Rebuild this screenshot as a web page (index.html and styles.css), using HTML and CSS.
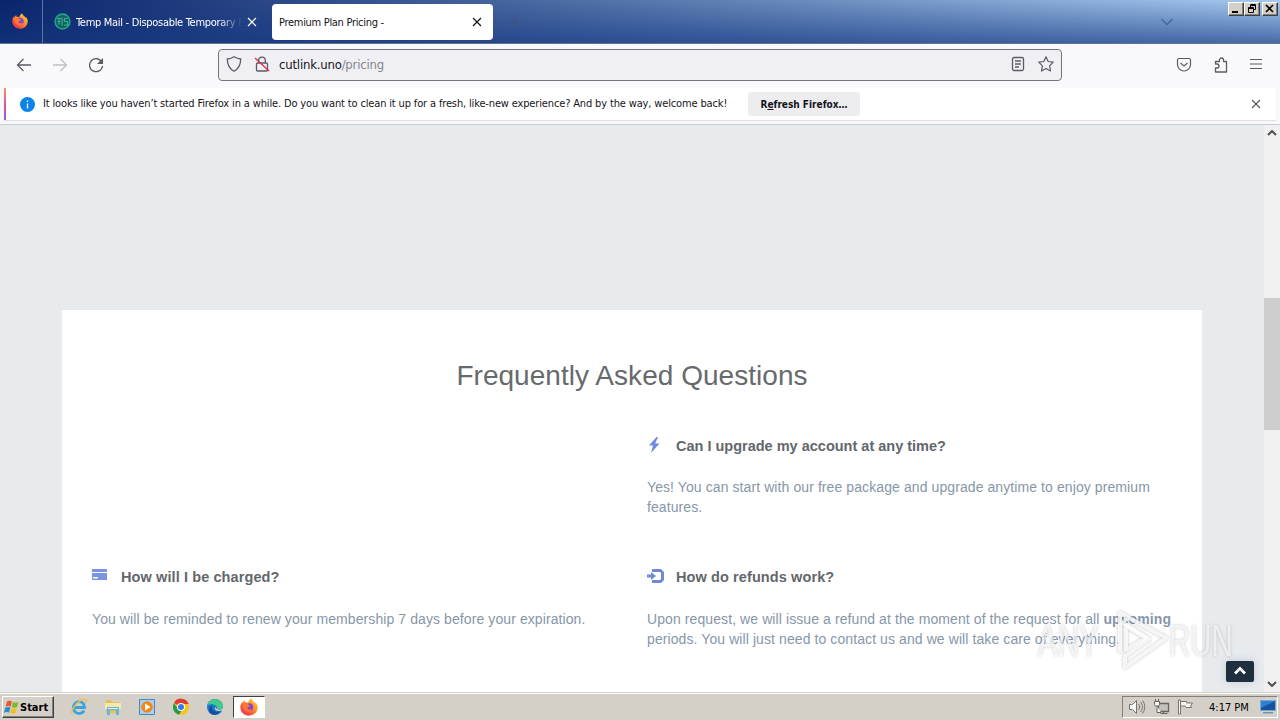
FILE: index.html
```html
<!DOCTYPE html>
<html lang="en">
<head>
    <meta charset="UTF-8">
    <meta name="viewport" content="width=device-width, initial-scale=1.0">
    <title>Premium Plan Pricing -</title>
    <link rel="stylesheet" href="styles.css">
</head>
<body>
    <!-- shared icons -->
    <svg class="defs" width="0" height="0">
        <defs>
            <linearGradient id="flame" x1="1" y1="0" x2="0.2" y2="1">
                <stop offset="0" stop-color="#ffe14a"/>
                <stop offset="0.45" stop-color="#ff9328"/>
                <stop offset="1" stop-color="#f0264f"/>
            </linearGradient>
            <symbol id="firefox" viewBox="0 0 16 16">
                <path fill="url(#flame)" d="M10.2.3c.3 1.500 1.200 2.200 2.200 3 .5.400.8.900 1 1.400l.5-.7C15.100 5.200 15.700 6.800 15.700 8.400c0 4.100-3.400 7.300-7.700 7.300S.3 12.500.3 8.300c0-2 .7-3.700 1.700-5l.3 1.200c.5-1.100 1.200-1.900 2-2.400l.2 1.700c1 0 1.900.1 2.700.4C7.800 2.200 8.800 1 10.200.3z"/>
                <circle cx="8.200" cy="8.200" r="3.500" fill="#8545cf"/>
                <path fill="#ff7633" d="M2.600 5c2-.7 3.600-.4 4.900.8L9.300 7c-.9.600-1.700.8-2.600 1-.4 1.300.4 2.300 1.700 2.400 1.100.1 1.700-.7 2.700-.4-1 2-3.100 2.700-5 2C3.600 11.200 2.300 8.200 2.600 5z"/>
            </symbol>
            <symbol id="close" viewBox="0 0 10 10">
                <path fill="none" stroke="currentColor" stroke-width="1.200" d="M1 1l8 8M9 1L1 9"/>
            </symbol>
        </defs>
    </svg>

    <div class="titlebar">
        <div class="pinned-tab"><svg width="16" height="16"><use href="#firefox"/></svg></div>
        <div class="tab">
            <svg width="17" height="17" viewBox="0 0 17 17" fill="none">
                <circle cx="8.500" cy="8.500" r="7.400" fill="#16605f" stroke="#1fa38d" stroke-width="1.600"/>
                <path stroke="#35ad99" stroke-width="1.200" d="M3 5.500h4M5 5.500v6M3.500 8.500h3M8 4.500v8M13.500 5.500h-3v3h3v3.500h-3.500"/>
            </svg>
            <span class="tab-title faded">Temp Mail - Disposable Temporary E</span>
            <svg class="tab-close" width="10" height="10"><use href="#close"/></svg>
        </div>
        <div class="tab active">
            <span class="tab-title">Premium Plan Pricing -</span>
            <svg class="tab-close" width="10" height="10"><use href="#close"/></svg>
        </div>
        <svg class="new-tab" width="10" height="10" viewBox="0 0 10 10"><path stroke="#42536f" stroke-width="1.300" d="M5 0v10M0 5h10"/></svg>
        <svg class="all-tabs" width="14" height="8" viewBox="0 0 14 8"><path fill="none" stroke="#4a6a9b" stroke-width="1.600" d="M1.500 1L7 6.500 12.500 1"/></svg>
        <div class="window-buttons">
            <span class="winbtn"><svg width="12" height="10" viewBox="0 0 12 10"><path fill="#000" d="M2 7h6v2H2z"/></svg></span>
            <span class="winbtn"><svg width="12" height="10" viewBox="0 0 12 10" fill="none" stroke="#000"><path d="M4.500 3V.5h5v5H8M4 1.500h6M2.500 3.500h5v5h-5zM2 4.500h6"/></svg></span>
            <span class="winbtn gap"><svg width="12" height="10" viewBox="0 0 12 10"><path stroke="#000" stroke-width="1.700" d="M2 1l7 7M9 1L2 8"/></svg></span>
        </div>
    </div>

    <div class="toolbar">
        <svg class="back" width="16" height="16" viewBox="0 0 16 16" fill="none" stroke="#5b5b66" stroke-width="1.300"><path d="M15 8H1.500M7.500 2L1.500 8l6 6"/></svg>
        <svg class="forward" width="16" height="16" viewBox="0 0 16 16" fill="none" stroke="#bfbfc6" stroke-width="1.300"><path d="M1 8h13.500M8.500 2l6 6-6 6"/></svg>
        <svg class="reload" width="16" height="16" viewBox="0 0 16 16" fill="none" stroke="#5b5b66" stroke-width="1.300"><path d="M14 5.500A6.500 6.500 0 1 0 14.500 9"/><path fill="#5b5b66" stroke="none" d="M15 1v6H9z"/></svg>
        <div class="urlbar">
            <svg width="16" height="16" viewBox="0 0 16 16" fill="none" stroke="#5b5b66" stroke-width="1.300"><path d="M8 .8c2 1.300 4.300 2 6.700 2.200 0 6-1.700 9.500-6.700 12.200C3 12.500 1.300 9 1.300 3 3.700 2.800 6 2.100 8 .8z"/></svg>
            <svg class="lock" width="16" height="16" viewBox="0 0 16 16" fill="none" stroke="#5b5b66" stroke-width="1.300"><rect x="2.500" y="7" width="11" height="8" rx="1"/><path d="M4.700 7V4.500a3.300 3.300 0 0 1 6.600 0V7"/><path stroke="#e22850" d="M1 2l14 13"/></svg>
            <span class="url">cutlink.uno<span class="path">/pricing</span></span>
            <svg class="reader" width="14" height="16" viewBox="0 0 14 16" fill="none" stroke="#5b5b66" stroke-width="1.300"><rect x="1.500" y="1.500" width="11" height="13" rx="1.500"/><path d="M4 5h6M4 8h6M4 11h4"/></svg>
            <svg width="16" height="16" viewBox="0 0 16 16" fill="none" stroke="#5b5b66" stroke-width="1.200" stroke-linejoin="round"><path d="M8 .8l2.200 4.700 5 .7-3.600 3.600.9 5.200L8 12.500 3.500 15l.9-5.200L.8 6.200l5-.7z"/></svg>
        </div>
        <svg class="pocket" width="16" height="16" viewBox="0 0 16 16" fill="none" stroke="#5b5b66" stroke-width="1.200"><path d="M3 1.500h10a1.500 1.500 0 0 1 1.500 1.500v4.500a6.500 6.500 0 0 1-13 0V3A1.500 1.500 0 0 1 3 1.500z"/><path d="M4.500 6L8 9l3.500-3"/></svg>
        <svg class="extensions" width="16" height="16" viewBox="0 0 16 16" fill="none" stroke="#5b5b66" stroke-width="1.300" stroke-linejoin="round"><path d="M2.500 15V11H4a2 2 0 0 0 0-4H2.500V4.500h4V3a2 2 0 0 1 4 0v1.500h3V15z"/></svg>
        <svg class="menu" width="14" height="14" viewBox="0 0 14 14"><path stroke="#5b5b66" stroke-width="1.200" d="M1 1.500h12M1 6h12M1 10.500h12"/></svg>
    </div>

    <div class="notice-area">
        <div class="notice">
            <span class="info"><svg width="15" height="15" viewBox="0 0 15 15"><circle cx="7.500" cy="7.500" r="7.500" fill="#0a84e8"/><path stroke="#fff" stroke-width="1.300" d="M7.500 6.500v5M7.500 3.500v1.500"/></svg></span>
            <span class="notice-text">It looks like you haven’t started Firefox in a while. Do you want to clean it up for a fresh, like-new experience? And by the way, welcome back!</span>
            <button class="refresh">R<u>e</u>fresh Firefox…</button>
            <svg class="notice-close" width="10" height="10"><use href="#close"/></svg>
        </div>
    </div>

    <div class="viewport">
        <div class="page">
            <div class="faq">
                <h2>Frequently Asked Questions</h2>
                <div class="questions">
                    <div class="question"></div>
                    <div class="question">
                        <h4><svg width="16" height="18" viewBox="0 0 16 18"><path fill="#6c8ae0" d="M9.500 1L2 9.500h4L4 17l8.500-9.500h-4.300L11 1z"/></svg>Can I upgrade my account at any time?</h4>
                        <p>Yes! You can start with our free package and upgrade anytime to enjoy premium features.</p>
                    </div>
                    <div class="question lower">
                        <h4><svg width="16" height="18" viewBox="0 0 16 18"><path fill="#7b93e3" d="M0 2h15v3H0zM0 6h15v7H0z"/><path fill="#fff" d="M1 10h5v1.500H1z"/></svg>How will I be charged?</h4>
                        <p>You will be reminded to renew your membership 7 days before your expiration.</p>
                    </div>
                    <div class="question lower">
                        <h4><svg width="18" height="18" viewBox="0 0 18 18"><path fill="#7189d8" d="M5 2h9l3 3v8l-3 3H5v-3h8l1-1V6l-1-1H5zM0 7.500h4V5l5 4-5 4v-2.500H0z"/></svg>How do refunds work?</h4>
                        <p>Upon request, we will issue a refund at the moment of the request for all <b>upcoming</b> periods. You will just need to contact us and we will take care of everything.</p>
                    </div>
                </div>
            </div>
        </div>
        <div class="scrollbar">
            <svg width="10" height="6" viewBox="0 0 10 6"><path fill="none" stroke="#505050" stroke-width="2" d="M1 5l4-4 4 4"/></svg>
            <div class="thumb"></div>
            <svg width="10" height="6" viewBox="0 0 10 6"><path fill="none" stroke="#505050" stroke-width="2" d="M1 1l4 4 4-4"/></svg>
        </div>
        <div class="to-top"><svg width="12" height="9" viewBox="0 0 12 9"><path fill="none" stroke="#fff" stroke-width="2.800" d="M1 7.500l5-5 5 5"/></svg></div>
        <div class="watermark">
            <span class="any">ANY</span>
            <svg width="60" height="64" viewBox="0 0 60 64" fill="none" stroke="#fff" stroke-opacity="0.800" stroke-width="4" stroke-linejoin="round"><path d="M10 15V4l46 25-41 29v-11l24-17L10 12v32"/><path d="M16 17v24l20-12z"/></svg>
            <span class="run">RUN</span>
        </div>
    </div>

    <div class="taskbar">
        <div class="start">
            <svg width="16" height="15" viewBox="0 0 16 15"><path fill="#e9572b" d="M3 1.500c2-1 3.500-.8 5 0L6.700 6.500c-1.600-.8-3.100-.8-5 0z"/><path fill="#7db928" d="M9 2c2 1 3.500.8 5.500 0l-1.400 5c-1.900.9-3.500.9-5.300 0z"/><path fill="#298bd4" d="M1.400 7.600c2-.9 3.500-.8 5 0L5 12.700c-1.500-.8-3-.8-5 0z"/><path fill="#f5bd24" d="M7.500 8c2 1 3.500.9 5.400 0l-1.400 5c-2 .9-3.600.9-5.400 0z"/></svg>
            <span>Start</span>
        </div>
        <div class="launchers">
            <svg width="18" height="18" viewBox="0 0 18 18" fill="none"><path stroke="#3aa4e2" stroke-width="2.800" d="M4 9.500h10.500C14.500 1.500 3.500 2 3.500 9.500c0 7 8.500 7.500 10.500 3"/><path stroke="#efbd3c" stroke-width="1.300" d="M2.500 16C-1 14 9-.5 16 1.500c1 .5.700 2-.3 3.500"/></svg>
            <svg width="18" height="18" viewBox="0 0 18 18"><path fill="#e8bf57" d="M2 2h5l1 2h7v11H2z"/><path fill="#fae9a4" d="M1 5h16v6H1z"/><path fill="#67b5db" d="M3 9h12v8h-3v-5H6v5H3z"/><path fill="#d6f0f7" d="M4 10h10v1H4z"/></svg>
            <svg width="18" height="18" viewBox="0 0 18 18"><path fill="#a6d1f2" stroke="#4588c1" d="M1.500 1.500h15v15h-15z"/><circle cx="9" cy="9" r="5.800" fill="#f58614"/><path fill="#fff" d="M7 5.500l5.500 3.500L7 12.500z"/></svg>
            <svg width="18" height="18" viewBox="0 0 18 18"><circle cx="9" cy="9" r="8" fill="#f8c51b"/><path fill="#de3c2f" d="M9 9L2 5a8 8 0 0 1 14.700 1H9z"/><path fill="#249b50" d="M2 5l4 6 4 1-3 4.800A8 8 0 0 1 2 5z"/><circle cx="9" cy="9" r="4" fill="#fff"/><circle cx="9" cy="9" r="3" fill="#347ddd"/></svg>
            <svg width="18" height="18" viewBox="0 0 18 18"><circle cx="9" cy="9" r="8" fill="#1679c9"/><path fill="#43c98b" d="M1.500 7C3.500-.5 16-1 17 8c0 3-3 4-6 3 1-4-5-6-9.500-4z"/><path fill="#174c9c" d="M7 7c-3 3 0 8 7 6.500-3 4-8 4-10 1.500S3 8.500 7 7z"/><path fill="#d4d0c8" d="M9 9c-1 3 2 4.800 6.500 3.500l1.500.5v-3c-2 2-4 2-6 1z"/></svg>
        </div>
        <div class="task-active"><svg width="18" height="18"><use href="#firefox"/></svg></div>
        <div class="tray">
            <svg width="18" height="16" viewBox="0 0 18 16" fill="none" stroke="#77756f"><path fill="#f7f7f5" d="M1.500 5.500h3l4-4v13l-4-4h-3z"/><path d="M10.500 5c1.500 2 1.500 4 0 6M12.500 3c2.500 3 2.500 7 0 10M14.500 1.500c3 4 3 9 0 13"/></svg>
            <svg width="17" height="16" viewBox="0 0 17 16" fill="none" stroke="#65645f"><path fill="#c4c2bc" stroke-width="1.300" d="M5.500 4.500h10v8h-10z"/><path d="M7.500 14.500h7M10.500 12v3"/><path fill="#f7f7f5" d="M1.500 2.500h5v3l-1 1.500h-3l-1-1.500zM2.500 0v2.500M5.500 0v2.500M4 7v6.500h4"/></svg>
            <svg width="17" height="16" viewBox="0 0 17 16" fill="#f7f7f5" stroke="#77756f"><path d="M1.500 1h2v14h-2zM3.500 2.500h6v1.500h6l-2 3 1 1.500H9l-1-1.500H3.500z"/></svg>
            <span class="clock">4:17 PM</span>
            <svg width="16" height="14" viewBox="0 0 16 14"><path fill="#17529f" stroke="#74abd8" d="M.5.5h15v10H.5z"/><path fill="#2f81cf" d="M1 1h14L1 8z"/><path fill="#7094b4" d="M3 12h10v1.500H3z"/></svg>
        </div>
    </div>
</body>
</html>
```

FILE: styles.css
```css
* {
    box-sizing: border-box;
}
body {
    margin: 0;
    width: 1280px;
    height: 720px;
    overflow: hidden;
    display: flex;
    flex-direction: column;
    font-family: "DejaVu Sans Condensed", "DejaVu Sans", Tahoma, sans-serif;
    font-size: 11px;
    color: #15141a;
}
svg {
    flex: none;
    display: block;
}
.defs {
    position: absolute;
}

/* Tabs */
.titlebar {
    height: 44px;
    flex: none;
    display: flex;
    align-items: center;
    background: linear-gradient(180deg, rgba(20,60,140,0), rgba(20,55,130,0.65)), linear-gradient(90deg, #0a246a, #a6caf0);
    border-bottom: 1px solid #687287;
}
.pinned-tab {
    width: 43px;
    height: 43px;
    padding: 13px 0 0 12px;
    border-right: 1px solid #61739f;
}
.tab {
    display: flex;
    align-items: center;
    width: 229px;
    height: 36px;
    padding: 0 15px 0 11px;
    color: #fff;
}
.tab.active {
    width: 221px;
    padding: 0 11px 0 7px;
    border-radius: 4px;
    background: #fff;
    color: #15141a;
}
.tab-title {
    flex: 1;
    overflow: hidden;
    white-space: nowrap;
    line-height: 16px;
    padding-top: 3px;
    letter-spacing: -0.3px;
}
.tab svg + .tab-title {
    margin-left: 5px;
}
.faded {
    -webkit-mask-image: linear-gradient(90deg, #000 86%, transparent);
    mask-image: linear-gradient(90deg, #000 86%, transparent);
}
.tab-close {
    margin-left: 5px;
}
.new-tab {
    margin-left: 17px;
    opacity: 0.7;
}
.all-tabs {
    margin-left: auto;
    margin-right: 54px;
}
.window-buttons {
    display: flex;
    align-self: flex-start;
    margin: 2px 2px 0 0;
}
.winbtn {
    width: 16px;
    height: 14px;
    padding: 1px;
    background: #d4d0c8;
    border: 1px solid;
    border-color: #fff #404040 #404040 #fff;
    box-shadow: inset -1px -1px #808080;
}
.winbtn.gap {
    margin-left: 2px;
}

/* Navigation */
.toolbar {
    height: 42px;
    flex: none;
    display: flex;
    align-items: center;
    padding: 0 17px 1px 16px;
    background: #f9f9fb;
}
.forward, .reload {
    margin-left: 20px;
}
.urlbar {
    width: 844px;
    height: 32px;
    margin-left: 114px;
    padding: 0 7px 1px;
    display: flex;
    align-items: center;
    background: #f0f0f4;
    border: 1px solid #74747e;
    border-radius: 4px;
}
.lock {
    margin-left: 12px;
}
.url {
    flex: 1;
    margin-left: 9px;
    font-size: 13px;
    letter-spacing: -0.2px;
}
.path {
    color: #85858d;
}
.reader {
    margin-right: 13px;
}
.pocket {
    margin-left: 114px;
}
.extensions {
    margin-left: 21px;
}
.menu {
    margin-left: auto;
}

/* Notification bar */
.notice-area {
    height: 39px;
    flex: none;
    padding: 2px 4px 4px;
    background: #f9f9fb;
    border-bottom: 1px solid #cccccf;
}
.notice {
    height: 32px;
    display: flex;
    align-items: center;
    padding: 0 15px 0 14px;
    background: #fff;
    border-left: 2px solid;
    border-image: linear-gradient(#f09a5c, #e0589a, #9059d8) 1;
    box-shadow: 0 1px 1px #e2e2e6;
}
.notice-text {
    width: 684px;
    margin: 0 0 2px 8px;
    white-space: nowrap;
    letter-spacing: -0.147px;
}
.refresh {
    width: 112px;
    height: 24px;
    margin-left: 21px;
    padding: 0;
    border: none;
    border-radius: 4px;
    background: #ededf0;
    color: #15141a;
    font: bold 10px "DejaVu Sans Condensed", "DejaVu Sans", sans-serif;
}
.notice-close {
    margin-left: auto;
    color: #5b5b66;
}

/* Page */
.viewport {
    position: relative;
    flex: 1;
    min-height: 0;
    display: flex;
    overflow: hidden;
    font-family: "Liberation Sans", Arial, sans-serif;
}
.page {
    flex: 1;
    padding: 185px 62px 0;
    background: #e7ebee;
}
.faq {
    height: 400px;
    padding: 48px 30px 0;
    background: #fff;
    color: #676a6c;
}
h2 {
    margin: 0 0 42px;
    font-size: 28px;
    line-height: 36px;
    font-weight: normal;
    text-align: center;
    letter-spacing: 0.04px;
}
.questions {
    display: grid;
    grid-template-columns: 525px 525px;
    grid-template-rows: 131px 131px;
    column-gap: 30px;
}
h4 {
    display: flex;
    margin: 0 0 21px;
    font-size: 14.5px;
    line-height: 20px;
    color: #63666b;
}
.lower h4 {
    margin-bottom: 22px;
    letter-spacing: 0.1px;
}
h4 svg {
    margin-right: 13px;
}
h4 svg[width="18"] {
    margin-right: 11px;
}
p {
    margin: 0;
    font-size: 14px;
    line-height: 20px;
    color: #8796a9;
    letter-spacing: 0.09px;
}
.scrollbar {
    width: 16px;
    display: flex;
    flex-direction: column;
    align-items: center;
    padding: 5px 0;
    background: #f0f0f0;
}
.thumb {
    width: 16px;
    height: 132px;
    margin: 162px 0 auto;
    background: #cdcdcd;
}
.to-top {
    position: absolute;
    right: 26px;
    bottom: 10px;
    width: 28px;
    height: 21px;
    padding: 5px 8px;
    border-radius: 2px;
    background: #1f2f3f;
    box-shadow: 0 0 8px rgba(70,80,120,0.2);
}
.watermark {
    position: absolute;
    left: 1038px;
    top: 484px;
    display: flex;
    align-items: center;
    font-size: 44px;
    line-height: 64px;
    color: rgba(255,255,255,0.65);
    filter: drop-shadow(0 0 1.5px rgba(90,90,100,0.45));
}
.watermark span {
    width: 66px;
    transform: scaleX(0.67);
    transform-origin: 0 50%;
    white-space: nowrap;
}
.watermark svg {
    margin: 0 -1px 0 6px;
}

/* Taskbar */
.taskbar {
    height: 28px;
    flex: none;
    display: flex;
    align-items: center;
    padding: 1px 2px 0;
    background: #d4d0c8;
    border-top: 1px solid #d4d0c8;
    box-shadow: inset 0 1px #fff;
}
.start {
    width: 52px;
    height: 22px;
    display: flex;
    align-items: center;
    padding-left: 1px;
    border: 1px solid;
    border-color: #fff #404040 #404040 #fff;
    box-shadow: inset -1px -1px #808080;
    color: #000;
    font-weight: bold;
}
.launchers {
    display: flex;
    gap: 16px;
    margin-left: 16px;
}
.task-active {
    width: 32px;
    height: 22px;
    margin-left: 9px;
    padding: 1px 6px;
    background: #fff;
    border: 1px solid;
    border-color: #404040 #fff #fff #404040;
}
.tray {
    width: 156px;
    height: 22px;
    margin-left: auto;
    display: flex;
    align-items: center;
    padding-left: 5px;
    gap: 7px;
    border: 1px solid;
    border-color: #808080 #fff #fff #808080;
}
.clock {
    margin: 0 4px 0 8px;
    color: #000;
    white-space: nowrap;
}
```
